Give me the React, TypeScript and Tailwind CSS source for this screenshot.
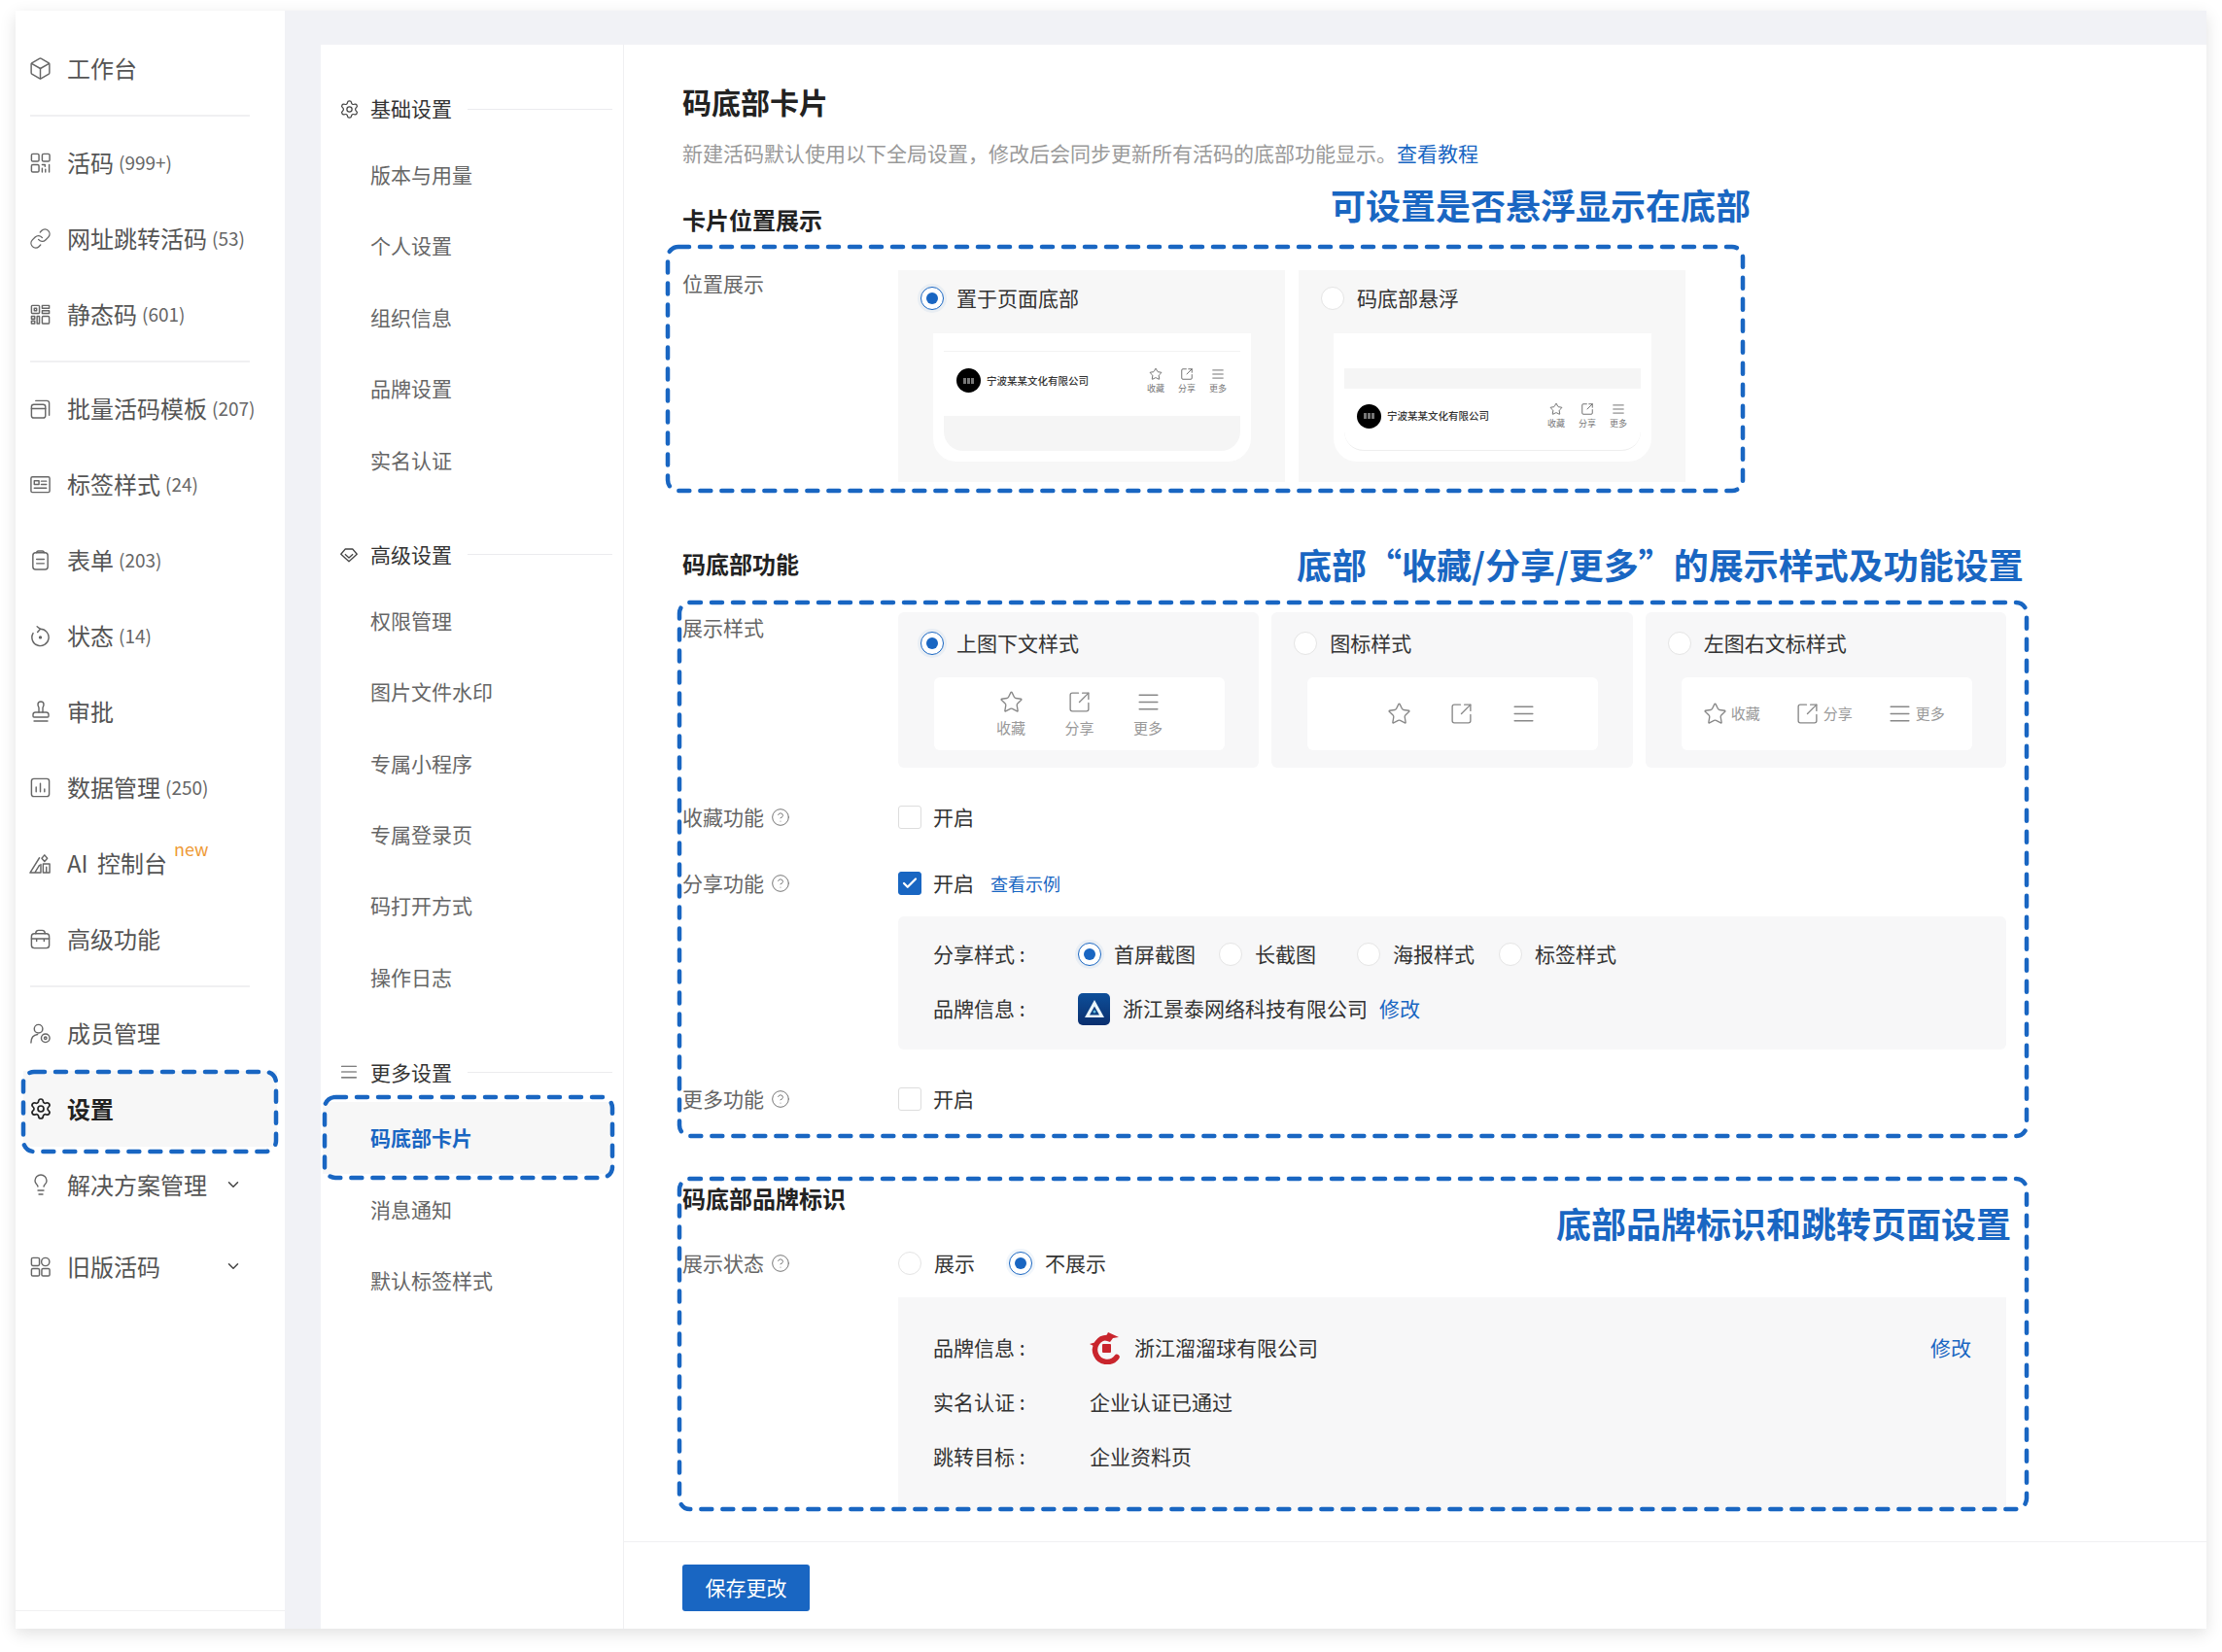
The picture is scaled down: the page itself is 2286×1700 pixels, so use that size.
import React from "react";
import { Settings, Star, SquareArrowOutUpRight, AlignJustify, ChevronDown, Link, Stamp, Check, CircleHelp, Box, Lightbulb } from "lucide-react";

const S = ({ children, w = 23, c = "text-[#666]" }: { children: React.ReactNode; w?: number; c?: string }) => (
  <svg width={w} height={w} viewBox="0 0 24 24" fill="none" stroke="currentColor" strokeWidth="1.5" strokeLinecap="round" strokeLinejoin="round" className={`${c} shrink-0`}>
    {children}
  </svg>
);

const icons: Record<string, React.ReactNode> = {
  live: <S><rect x="2.5" y="2.5" width="8" height="8" rx="1.5" /><rect x="14" y="2.5" width="8" height="8" rx="1.5" /><rect x="2.5" y="14" width="8" height="8" rx="1.5" /><path d="M14 14h3v2M14 18v4M21.5 14v8M17.5 19v3" /></S>,
  link: <Link size={23} strokeWidth={1.4} className="text-[#666] shrink-0" />,
  qr: <S><rect x="2.5" y="2.5" width="8.5" height="8.5" rx="1" /><rect x="5.5" y="5.5" width="2.5" height="2.5" /><rect x="14" y="2.5" width="7.5" height="3" /><rect x="14" y="8" width="7.5" height="3" /><rect x="2.5" y="14" width="3.5" height="3" /><rect x="2.5" y="19" width="3.5" height="3" /><rect x="8.5" y="14" width="2.5" height="8" /><rect x="14" y="14" width="7.5" height="8" rx="1" /></S>,
  batch: <S><rect x="2.5" y="7.5" width="15" height="14.5" rx="2.5" /><path d="M2.5 12h15M7 3.5h12a2.5 2.5 0 0 1 2.5 2.5v13" /></S>,
  tag: <S><rect x="2" y="4" width="20" height="16.5" rx="1.5" /><rect x="5.5" y="8" width="5" height="4" /><path d="M13 8.5h5.5M13 12h5.5M5.5 16h13" /></S>,
  form: <S><rect x="4" y="4" width="16" height="18" rx="3" /><path d="M8 4c0-1.5 1-2 2-2h4c1 0 2 .5 2 2M8 11h8M8 15.5h8" /></S>,
  status: <S><path d="M12 4.500a9 9 0 1 1-7.800 4.500" /><path d="M8.500 1.800 12 4.500 9 7.800" /><circle cx="12" cy="13.500" r="1" fill="currentColor" /></S>,
  approve: <Stamp size={24} strokeWidth={1.4} className="text-[#666] shrink-0" />,
  data: <S><rect x="2.5" y="2.5" width="19" height="19" rx="2.5" /><path d="M7.500 16.500v-5M12 16.500v-9M16.500 16.500v-3" /></S>,
  ai: <S><path d="M1 22h11.500V13M1 22 11 6M6 22l5-8" /><path d="M16.500 3l3 3.500-3 3.500-3-3.500zM15 12.500h7V22h-7zM18.500 16v6" /></S>,
  adv: <S><rect x="2.5" y="6" width="19" height="15.500" rx="3" /><path d="M7 6c0-2 1-3.500 3-3.500h4c2 0 3 1.500 3 3.500M2.500 11.500h19M8 11.500v2.500M16 11.500v2.500" /></S>,
  member: <S><circle cx="10" cy="7" r="4.500" /><path d="M2 22c0-6 2.500-8.500 7-9" /><circle cx="17.500" cy="17" r="4.500" /><circle cx="17.500" cy="17" r="1.300" /></S>,
  gear: <Settings size={24} strokeWidth={1.7} className="text-[#222] shrink-0" />,
  bulb: <Lightbulb size={24} strokeWidth={1.4} className="text-[#666] shrink-0" />,
  old: <S><rect x="2.5" y="2.5" width="8.500" height="8.500" rx="1.500" /><circle cx="17.500" cy="6.800" r="4.300" /><rect x="2.500" y="14" width="8.500" height="8" rx="1.500" /><rect x="13.500" y="14" width="8.500" height="8" rx="1.500" /></S>,
};

const Nav = ({ icon, label, count, active, chevron, extra }: { icon: React.ReactNode; label: string; count?: string; active?: boolean; chevron?: boolean; extra?: React.ReactNode }) => (
  <div className={`relative mx-[8px] h-[78px] pl-[7px] flex items-center shrink-0 ${active ? "bg-[#f7f7f7]" : ""}`}>
    <span className="w-[21px] h-[21px] flex items-center justify-center shrink-0">{icon}</span>
    <span className={`ml-[17px] text-[24px] leading-[32px] [word-spacing:4px] ${active ? "font-bold text-[#222]" : "text-[#555]"}`}>{label}</span>
    {count && <span className="ml-[5px] text-[19px] text-[#666]">{count}</span>}
    {extra}
    {chevron && <ChevronDown size={18} strokeWidth={2} className="absolute left-[207px] text-[#444]" />}
  </div>
);

const Divider = () => <div className="mx-[15px] w-[226px] h-[19px] flex items-center shrink-0"><div className="w-full h-[2px] bg-[#f0f0f2]" /></div>;

const Sidebar = () => (
  <aside className="w-[277px] h-full bg-white flex flex-col pt-[20px]">
    <Nav icon={<Box size={25} strokeWidth={1.4} className="text-[#666] shrink-0" />} label="工作台" />
    <Divider />
    <Nav icon={icons.live} label="活码" count="(999+)" />
    <Nav icon={icons.link} label="网址跳转活码" count="(53)" />
    <Nav icon={icons.qr} label="静态码" count="(601)" />
    <Divider />
    <Nav icon={icons.batch} label="批量活码模板" count="(207)" />
    <Nav icon={icons.tag} label="标签样式" count="(24)" />
    <Nav icon={icons.form} label="表单" count="(203)" />
    <Nav icon={icons.status} label="状态" count="(14)" />
    <Nav icon={icons.approve} label="审批" />
    <Nav icon={icons.data} label="数据管理" count="(250)" />
    <Nav icon={icons.ai} label="AI 控制台" extra={<span className="absolute left-[155px] top-[12px] text-[18px] leading-[24px] text-[#ee9a36]">new</span>} />
    <Nav icon={icons.adv} label="高级功能" />
    <Divider />
    <Nav icon={icons.member} label="成员管理" />
    <Nav icon={icons.gear} label="设置" active />
    <Nav icon={icons.bulb} label="解决方案管理" chevron />
    <div className="h-[6px] shrink-0" />
    <Nav icon={icons.old} label="旧版活码" chevron />
    <div className="mt-auto mb-[18px] h-[1px] bg-[#f0f0f2]" />
  </aside>
);

const SubHead = ({ icon, label, first }: { icon: React.ReactNode; label: string; first?: boolean }) => (
  <div className={`h-[40px] flex items-center pl-[20px] pr-[11px] shrink-0 ${first ? "" : "mt-[41px]"}`}>
    <span className="w-[18px] flex justify-center shrink-0">{icon}</span>
    <span className="ml-[13px] text-[21px] text-[#333] whitespace-nowrap">{label}</span>
    <div className="ml-[16px] flex-1 h-[1px] bg-[#ebebee]" />
  </div>
);

const SubItem = ({ label, active }: { label: string; active?: boolean }) => (
  <div className={`h-[73.4px] ml-[2px] mr-[11px] pl-[49px] flex items-center text-[21px] shrink-0 ${active ? "bg-[#f7f7f7] text-[#1966c2] font-bold" : "text-[#666]"}`}>{label}</div>
);

const SubNav = () => (
  <nav className="w-[312px] border-r border-[#f0f0f2] pt-[46px] flex flex-col shrink-0">
    <SubHead first label="基础设置" icon={<Settings size={21} strokeWidth={1.4} className="text-[#444] shrink-0" />} />
    <div className="mt-[11px] flex flex-col">
      {["版本与用量", "个人设置", "组织信息", "品牌设置", "实名认证"].map((t) => <SubItem key={t} label={t} />)}
    </div>
    <SubHead label="高级设置" icon={<svg width="18" height="18" viewBox="0 0 24 24" fill="none" stroke="#444" strokeWidth="1.7" strokeLinejoin="round" className="shrink-0"><path d="M7 4h10l6 7-11 10L1 11z" /><path d="M6.500 11l5.500 5 5.500-5" /></svg>} />
    <div className="mt-[11px] flex flex-col">
      {["权限管理", "图片文件水印", "专属小程序", "专属登录页", "码打开方式", "操作日志"].map((t) => <SubItem key={t} label={t} />)}
    </div>
    <SubHead label="更多设置" icon={<AlignJustify size={20} strokeWidth={1.3} className="text-[#555] shrink-0" />} />
    <div className="mt-[11px] flex flex-col">
      <SubItem label="码底部卡片" active />
      <SubItem label="消息通知" />
      <SubItem label="默认标签样式" />
    </div>
  </nav>
);

const Radio = ({ on }: { on?: boolean }) => (
  <span className={`w-[24px] h-[24px] rounded-full border bg-white flex items-center justify-center shrink-0 ${on ? "border-[#1966c2] shadow-[0_0_0_3px_rgba(25,102,194,0.06)]" : "border-[#e4e4e4]"}`}>
    {on && <span className="w-[12px] h-[12px] rounded-full bg-[#1966c2]" />}
  </span>
);

const RadioLine = ({ on, label }: { on?: boolean; label: string }) => (
  <div className="flex items-center gap-[13px] h-[24px]">
    <Radio on={on} />
    <span className="text-[21px] text-[#333] whitespace-nowrap">{label}</span>
  </div>
);

const MiniItem = ({ icon, label }: { icon: React.ReactNode; label: string }) => (
  <div className="w-[32px] flex flex-col items-center gap-[2px]">
    {icon}
    <span className="text-[9px] leading-[12px] text-[#777]">{label}</span>
  </div>
);

const MiniCard = () => (
  <>
    <div className="w-[25px] h-[25px] rounded-full bg-black flex items-center justify-center gap-[1px] shrink-0">
      <span className="w-[3px] h-[6px] bg-[#777]" /><span className="w-[3px] h-[6px] bg-[#777]" /><span className="w-[3px] h-[6px] bg-[#777]" />
    </div>
    <span className="ml-[6px] text-[10.500px] font-medium text-[#333] whitespace-nowrap">宁波某某文化有限公司</span>
    <div className="ml-auto flex pr-[7px]">
      <MiniItem label="收藏" icon={<Star size={14} strokeWidth={1.4} className="text-[#555]" />} />
      <MiniItem label="分享" icon={<SquareArrowOutUpRight size={14} strokeWidth={1.4} className="text-[#555]" />} />
      <MiniItem label="更多" icon={<AlignJustify size={14} strokeWidth={1.4} className="text-[#555]" />} />
    </div>
  </>
);

const Phone = ({ floating }: { floating?: boolean }) => (
  <div className="mt-[24px] ml-[36px] w-[327px] h-[132px] bg-white rounded-b-[24px] px-[11px] pb-[11px]">
    <div className="h-full bg-[#f5f5f5] rounded-b-[20px] overflow-hidden flex flex-col">
      {floating ? (
        <>
          <div className="h-[36px] bg-white shrink-0" />
          <div className="h-[21px] shrink-0" />
          <div className="flex-1 bg-white rounded-b-[20px] flex items-center pl-[13px] pb-[7px] border-b border-[#eee]"><MiniCard /></div>
        </>
      ) : (
        <>
          <div className="h-[19px] bg-white shrink-0 border-b border-[#f3f3f3]" />
          <div className="h-[66px] bg-white shrink-0 flex items-center pl-[13px] pb-[7px]"><MiniCard /></div>
        </>
      )}
    </div>
  </div>
);

const BigStar = () => <Star size={25} strokeWidth={1.3} className="text-[#888] shrink-0" />;
const BigShare = () => <SquareArrowOutUpRight size={25} strokeWidth={1.3} className="text-[#888] shrink-0" />;
const BigMore = () => <AlignJustify size={25} strokeWidth={1.3} className="text-[#888] shrink-0" />;

const StyleCard = ({ on, label, children }: { on?: boolean; label: string; children: React.ReactNode }) => (
  <div className="flex-1 h-[160px] rounded-[6px] bg-[#f7f7f8] pt-[20px] pl-[23px]">
    <RadioLine on={on} label={label} />
    <div className="mt-[23px] ml-[14px] w-[299px] h-[75px] rounded-[6px] bg-white flex items-center justify-center">{children}</div>
  </div>
);

const Label = ({ children, help }: { children: React.ReactNode; help?: boolean }) => (
  <div className="w-[222px] flex items-center shrink-0 text-[21px] text-[#666] h-[30px]">
    <span>{children}</span>
    {help && <CircleHelp size={20} strokeWidth={1.2} className="ml-[7px] text-[#777]" />}
  </div>
);

const CheckBox = ({ on }: { on?: boolean }) => (
  <span className={`w-[24px] h-[24px] rounded-[3px] border flex items-center justify-center shrink-0 ${on ? "bg-[#1966c2] border-[#1966c2]" : "bg-white border-[#ddd]"}`}>
    {on && <Check size={18} strokeWidth={3} className="text-white" />}
  </span>
);

const Toggle = ({ help, label, on, extra }: { help?: boolean; label: string; on?: boolean; extra?: React.ReactNode }) => (
  <div className="flex items-center h-[32px]">
    <Label help={help}>{label}</Label>
    <CheckBox on={on} />
    <span className="ml-[12px] text-[21px] text-[#333]">开启</span>
    {extra}
  </div>
);

const Section = ({ children, className }: { children: React.ReactNode; className: string }) => (
  <h3 className={`h-[32px] flex items-center text-[24px] font-bold text-[#222] ${className}`}>{children}</h3>
);

const Main = () => (
  <main className="flex-1 flex flex-col min-w-0">
    <div className="flex-1 pl-[60px] pt-[38px]">
      <h2 className="h-[40px] flex items-center text-[30px] font-bold text-[#222]">码底部卡片</h2>
      <p className="mt-[19px] h-[30px] flex items-center text-[21px] text-[#999]">新建活码默认使用以下全局设置，修改后会同步更新所有活码的底部功能显示。<span className="text-[#1966c2]">查看教程</span></p>

      <Section className="mt-[37px]">卡片位置展示</Section>
      <div className="mt-[36px] flex">
        <div className="-mt-[1px]"><Label>位置展示</Label></div>
        <div className="flex gap-[14px]">
          <div className="w-[398px] h-[218px] bg-[#f7f7f7] pt-[17px] pl-[23px]">
            <RadioLine on label="置于页面底部" />
            <div className="-ml-[23px]"><Phone /></div>
          </div>
          <div className="w-[398px] h-[218px] bg-[#f7f7f7] pt-[17px] pl-[23px]">
            <RadioLine label="码底部悬浮" />
            <div className="-ml-[23px]"><Phone floating /></div>
          </div>
        </div>
      </div>

      <Section className="mt-[68px]">码底部功能</Section>
      <div className="mt-[34px] flex">
        <div className="pt-[1px]"><Label>展示样式</Label></div>
        <div className="w-[1140px] flex gap-[13px]">
          <StyleCard on label="上图下文样式">
            {([["收藏", <BigStar key="a" />], ["分享", <BigShare key="b" />], ["更多", <BigMore key="c" />]] as const).map(([t, i]) => (
              <div key={t} className="w-[70.500px] flex flex-col items-center gap-[4px]">{i}<span className="text-[15px] leading-[20px] text-[#999]">{t}</span></div>
            ))}
          </StyleCard>
          <StyleCard label="图标样式">
            <div className="ml-[18px] flex gap-[39px]"><BigStar /><BigShare /><BigMore /></div>
          </StyleCard>
          <StyleCard label="左图右文标样式">
            <div className="-ml-[4px] flex gap-[34px]">
              {([["收藏", <BigStar key="a" />], ["分享", <BigShare key="b" />], ["更多", <BigMore key="c" />]] as const).map(([t, i]) => (
                <div key={t} className="w-[61px] flex items-center gap-[4px] text-[15px] text-[#999] whitespace-nowrap">{i}{t}</div>
              ))}
            </div>
          </StyleCard>
        </div>
      </div>

      <div className="mt-[35px]"><Toggle help label="收藏功能" /></div>
      <div className="mt-[36px]"><Toggle help on label="分享功能" extra={<span className="ml-[17px] text-[18px] text-[#1966c2]">查看示例</span>} /></div>

      <div className="mt-[18px] ml-[222px] w-[1140px] h-[137px] rounded-[6px] bg-[#f7f7f8] pl-[36px] pt-[23px]">
        <div className="h-[32px] flex items-center text-[21px] text-[#333]">
          <span className="w-[149px] whitespace-pre">分享样式 :</span>
          <div className="flex items-center">
            <div className="mr-[24px]"><RadioLine on label="首屏截图" /></div>
            <div className="w-[142px]"><RadioLine label="长截图" /></div>
            <div className="mr-[25px]"><RadioLine label="海报样式" /></div>
            <RadioLine label="标签样式" />
          </div>
        </div>
        <div className="mt-[24px] h-[32px] flex items-center text-[21px] text-[#333]">
          <span className="w-[149px] whitespace-pre">品牌信息 :</span>
          <div className="w-[33px] h-[33px] rounded-[5px] bg-gradient-to-b from-[#0d4f9a] to-[#0a2f6e] flex items-center justify-center shrink-0">
            <svg width="22" height="20" viewBox="0 0 22 20"><path d="M11 1 21 19H1z" fill="#eaf6fb" /><path d="M11 7.500 16 16.500H6z" fill="#0d3f82" /><circle cx="11" cy="13" r="1.500" fill="#5db8dc" /></svg>
          </div>
          <span className="ml-[13px] whitespace-nowrap">浙江景泰网络科技有限公司</span>
          <span className="ml-[12px] text-[#1966c2]">修改</span>
        </div>
      </div>

      <div className="mt-[35px]"><Toggle help label="更多功能" /></div>

      <Section className="mt-[70px]">码底部品牌标识</Section>
      <div className="mt-[35px] flex items-center h-[32px]">
        <Label help>展示状态</Label>
        <div className="flex items-center">
          <div className="w-[114px]"><RadioLine label="展示" /></div>
          <RadioLine on label="不展示" />
        </div>
      </div>
      <div className="mt-[19px] ml-[222px] w-[1140px] h-[219px] bg-[#f7f7f8] pl-[36px] pr-[36px] pt-[36px] flex flex-col gap-[24px] text-[21px] text-[#333]">
        <div className="h-[32px] flex items-center">
          <span className="w-[161px] whitespace-pre">品牌信息 :</span>
          <svg width="34" height="34" viewBox="0 0 34 34" fill="none" className="shrink-0">
            <path d="M28 26.500A12.500 12.500 0 1 1 19 6.500" stroke="#c9252d" strokeWidth="5.500" strokeLinecap="round" />
            <path d="M0 13l7-2 1 6zM15 9l4-8 11 5-6 1-3 4z" fill="#c9252d" />
            <rect x="13" y="13" width="9" height="9" rx="1" fill="#c9252d" />
          </svg>
          <span className="ml-[12px] whitespace-nowrap">浙江溜溜球有限公司</span>
          <span className="ml-auto text-[#1966c2]">修改</span>
        </div>
        <div className="h-[32px] flex items-center"><span className="w-[161px] whitespace-pre">实名认证 :</span><span>企业认证已通过</span></div>
        <div className="h-[32px] flex items-center"><span className="w-[161px] whitespace-pre">跳转目标 :</span><span>企业资料页</span></div>
      </div>
    </div>
    <div className="h-[90px] border-t border-[#f0f0f2] pl-[60px] pt-[23px] shrink-0">
      <button className="w-[131px] h-[48px] rounded-[3px] bg-[#1966c2] text-white text-[21px]">保存更改</button>
    </div>
  </main>
);

const DashBox = ({ w, h, className }: { w: number; h: number; className: string }) => (
  <svg width={w} height={h} className={`absolute pointer-events-none ${className}`} fill="none">
    <rect x="3" y="3" width={w - 6} height={h - 6} rx="11" stroke="#1966c2" strokeWidth="4.5" strokeDasharray="11 11" strokeLinecap="round" />
  </svg>
);

const Note = ({ children, className }: { children: React.ReactNode; className: string }) => (
  <div className={`absolute text-[36px] leading-[48px] font-bold text-[#1966c2] whitespace-nowrap ${className}`}>{children}</div>
);

export default function App() {
  return (
    <div className="relative w-[2286px] h-[1700px] bg-white pt-[11px] pl-[16px] overflow-hidden [font-family:'Noto_Sans_CJK_SC','Noto_Sans',sans-serif]">
      <div className="w-[2254px] h-[1665px] flex shadow-[0_5px_16px_rgba(0,0,0,0.12)]">
        <Sidebar />
        <div className="flex-1 min-w-0 bg-[#f1f2f6] pl-[37px] pt-[35px] flex">
          <div className="flex-1 min-w-0 bg-white flex">
            <SubNav />
            <Main />
          </div>
        </div>
      </div>

      <DashBox w={266} h={88} className="left-[21px] top-[1100px]" />
      <DashBox w={302} h={89} className="left-[331px] top-[1126px]" />
      <DashBox w={1112} h={257} className="left-[684px] top-[251px]" />
      <DashBox w={1392} h={555} className="left-[696px] top-[617px]" />
      <DashBox w={1392} h={346} className="left-[696px] top-[1210px]" />

      <Note className="left-[1369px] top-[186px]">可设置是否悬浮显示在底部</Note>
      <Note className="left-[1334px] top-[556px]">底部“收藏/分享/更多”的展示样式及功能设置</Note>
      <Note className="left-[1601px] top-[1234px]">底部品牌标识和跳转页面设置</Note>
    </div>
  );
}
